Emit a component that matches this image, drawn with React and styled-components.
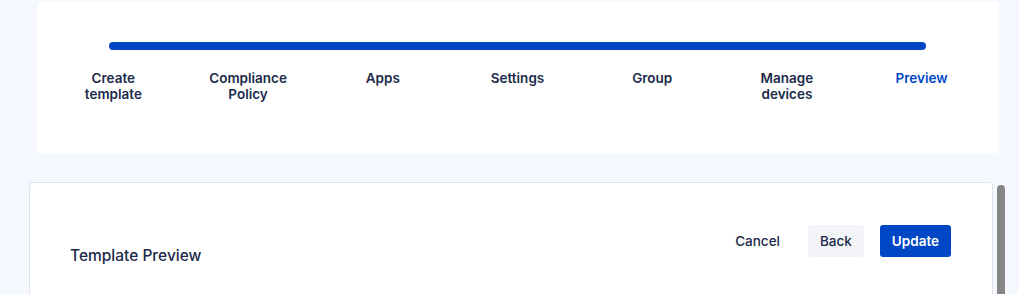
import React from "react";
import styled, { createGlobalStyle } from "styled-components";

const Global = createGlobalStyle`
  html, body { margin: 0; padding: 0; background: #f5f8fe; }
  body { font-family: Inter, "Noto Sans", "Liberation Sans", sans-serif; color: #1b2a4a; }
  * { box-sizing: border-box; }
`;

const Page = styled.div`
  width: 1019px;
  height: 294px;
  overflow: hidden;
  padding-top: 2px;
`;

const StepperCard = styled.section`
  margin-left: 37px;
  width: 962px;
  height: 151px;
  background: #ffffff;
  padding: 40px 10px 0 9px;
`;

const Track = styled.div`
  height: 8px;
  border-radius: 4px;
  background: #0047c6;
  margin: 0 63px;
`;

const Steps = styled.div`
  display: grid;
  grid-template-columns: repeat(7, 1fr);
  margin-top: 20px;
`;

const StepLabel = styled.div`
  text-align: center;
  font-size: 13.5px;
  line-height: 16px;
  font-weight: 600;
  color: ${(p) => (p.$active ? "#0047c6" : "#1b2a4a")};
`;

const Lower = styled.div`
  display: flex;
  margin-top: 29px;
`;

const Card = styled.section`
  margin-left: 29px;
  width: 964px;
  height: 140px;
  background: #ffffff;
  border: 1px solid #dfe3ea;
  border-bottom: none;
  border-radius: 4px 4px 0 0;
  padding: 42px 41px 0 40px;
`;

const Header = styled.div`
  display: flex;
  justify-content: space-between;
  align-items: flex-start;
`;

const Title = styled.h2`
  margin: 19px 0 0;
  font-size: 15.5px;
  line-height: 24px;
  font-weight: 500;
  color: #1b2a4a;
`;

const Actions = styled.div`
  display: flex;
  gap: 16px;
`;

const Button = styled.button`
  height: 32px;
  padding: 0 12px;
  border: none;
  border-radius: 3px;
  font-family: inherit;
  font-size: 13.5px;
  font-weight: ${(p) => (p.$variant === "primary" ? 600 : 500)};
  cursor: pointer;
  background: ${(p) =>
    p.$variant === "primary" ? "#0047c6" : p.$variant === "secondary" ? "#f3f4f7" : "transparent"};
  color: ${(p) => (p.$variant === "primary" ? "#ffffff" : "#1b2a4a")};
`;

const ScrollThumb = styled.div`
  width: 8px;
  height: 120px;
  margin: 3px 0 0 4px;
  border-radius: 4px;
  background: #868686;
`;

const steps = [
  ["Create", "template"],
  ["Compliance", "Policy"],
  ["Apps"],
  ["Settings"],
  ["Group"],
  ["Manage", "devices"],
  ["Preview"],
];

export default function App() {
  return (
    <Page>
      <Global />
      <StepperCard>
        <Track />
        <Steps>
          {steps.map((lines, i) => (
            <StepLabel key={i} $active={i === steps.length - 1}>
              {lines.map((l, j) => (
                <div key={j}>{l}</div>
              ))}
            </StepLabel>
          ))}
        </Steps>
      </StepperCard>
      <Lower>
        <Card>
          <Header>
            <Title>Template Preview</Title>
            <Actions>
              <Button>Cancel</Button>
              <Button $variant="secondary">Back</Button>
              <Button $variant="primary">Update</Button>
            </Actions>
          </Header>
        </Card>
        <ScrollThumb />
      </Lower>
    </Page>
  );
}
